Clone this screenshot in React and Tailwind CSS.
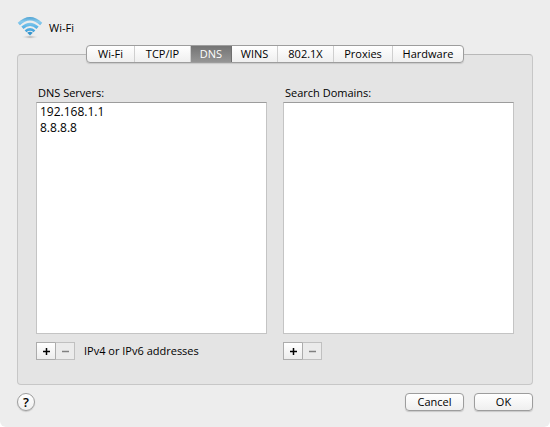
import React, { useState } from 'react';

const tabs = [
    { id: 'wifi', label: 'Wi-Fi', width: 'w-12' },
    { id: 'tcpip', label: 'TCP/IP', width: 'w-14' },
    { id: 'dns', label: 'DNS', width: 'w-[41px]' },
    { id: 'wins', label: 'WINS', width: 'w-[46px]' },
    { id: '8021x', label: '802.1X', width: 'w-14' },
    { id: 'proxies', label: 'Proxies', width: 'w-[59px]' },
    { id: 'hardware', label: 'Hardware', width: 'w-[70px]' },
];

function WifiIcon() {
    return (
        <svg viewBox="0 0 26 24" className="w-[26px] h-6 shrink-0" aria-hidden="true">
            <defs>
                <linearGradient id="signal" x1="0" y1="1" x2="0" y2="20" gradientUnits="userSpaceOnUse">
                    <stop offset="0" stopColor="#4fa3d3" />
                    <stop offset="0.25" stopColor="#8acbed" />
                    <stop offset="0.5" stopColor="#5fb6e6" />
                    <stop offset="1" stopColor="#2b91d0" />
                </linearGradient>
                <radialGradient id="ground">
                    <stop offset="0" stopColor="#a2a2a2" />
                    <stop offset="1" stopColor="#ededed" stopOpacity="0" />
                </radialGradient>
            </defs>
            <ellipse cx="13" cy="21" rx="9" ry="2" fill="url(#ground)" />
            <g fill="none" stroke="url(#signal)" strokeWidth="3.2">
                <path d="M1.8 8Q13 -2.4 24.2 8" />
                <path d="M5.4 11.7Q13 5 20.6 11.7" />
                <path d="M8.5 15.2Q13 11.6 17.5 15.2" strokeWidth="2.7" />
            </g>
            <path d="M10.2 16.7Q13 14.6 15.8 16.7L13 19.5Z" fill="#3595cd" />
        </svg>
    );
}

function Sign({ plus }) {
    return (
        <svg viewBox="0 0 7 7" className="w-[7px] h-[7px]" fill="none" stroke="currentColor" strokeWidth="1.5" aria-hidden="true">
            <path d="M0 3.5H7" />
            {plus && <path d="M3.5 0V7" />}
        </svg>
    );
}

function AddressList({ id, label, items, hint }) {
    return (
        <section className="flex flex-1 flex-col min-w-0">
            <h2 id={id} className="pl-0.5 mb-px text-[11px] leading-4">{label}</h2>
            <ul
                role="listbox"
                aria-labelledby={id}
                className="flex-1 px-[3px] pt-px bg-white border border-[#c4c4c4] border-t-[#9c9c9c] text-xs leading-4"
            >
                {items.map(item => (
                    <li key={item} role="option" aria-selected="false">{item}</li>
                ))}
            </ul>
            <div className="mt-2 flex items-center">
                <button type="button" aria-label={`Add to ${label}`} className="w-5 h-[18px] flex items-center justify-center border border-[#acacac] bg-gradient-to-b from-white to-[#ededed] text-black">
                    <Sign plus />
                </button>
                <button type="button" aria-label={`Remove from ${label}`} disabled className="-ml-px w-5 h-[18px] flex items-center justify-center border border-[#c0c0c0] border-l-[#acacac] bg-[#ebebeb] text-[#808080]">
                    <Sign />
                </button>
                {hint && <p className="ml-[9px] text-[11px] leading-4 whitespace-nowrap">{hint}</p>}
            </div>
        </section>
    );
}

export default function App() {
    const [active, setActive] = useState('dns');
    const raised = 'border border-[#9d9d9d] bg-gradient-to-b from-white to-[#efefef] shadow-[0_1px_1px_#c8c8c8]';

    return (
        <div className="bg-white">
            <main className="min-h-screen flex flex-col px-[17px] pt-4 pb-4 rounded-b-md bg-[#ededed] font-['Open_Sans','Noto_Sans',sans-serif] text-[11px] text-black">
                <header className="h-6 flex items-center gap-[6px]">
                    <WifiIcon />
                    <h1 className="text-[11px] leading-4">Wi-Fi</h1>
                </header>

                <div className="mt-[14px] flex flex-1 flex-col border border-[#c7c7c7] border-t-[#b8b8b8] rounded bg-[#e4e4e4]">
                    {/* Tab strip sits across the top edge of the panel */}
                    <div role="tablist" className={`-mt-[10px] self-center flex max-w-full h-[18px] rounded ${raised}`}>
                        {tabs.map(tab => (
                            <button
                                key={tab.id}
                                type="button"
                                role="tab"
                                aria-selected={active === tab.id}
                                onClick={() => setActive(tab.id)}
                                className={`${tab.width} flex items-center justify-center text-[11px] leading-4 border-r last:border-r-0 ${
                                    active === tab.id
                                        ? 'bg-gradient-to-b from-[#747474] to-[#959595] border-[#6f6f6f] text-white'
                                        : 'border-[#cfcfcf]'
                                }`}
                            >
                                {tab.label}
                            </button>
                        ))}
                    </div>

                    <div role="tabpanel" className="flex flex-1 gap-4 px-[18px] pt-[22px] pb-6">
                        <AddressList id="dns-servers" label="DNS Servers:" items={['192.168.1.1', '8.8.8.8']} hint="IPv4 or IPv6 addresses" />
                        <AddressList id="search-domains" label="Search Domains:" items={[]} />
                    </div>
                </div>

                <footer className="mt-2 flex items-center gap-[10px]">
                    <button type="button" aria-label="Help" className={`mr-auto w-[18px] h-[18px] flex items-center justify-center rounded-full text-[13px] leading-4 font-semibold ${raised}`}>?</button>
                    <button type="button" className={`w-[59px] h-[18px] flex items-center justify-center rounded text-[11px] leading-4 ${raised}`}>Cancel</button>
                    <button type="button" className={`w-[59px] h-[18px] flex items-center justify-center rounded text-[11px] leading-4 ${raised}`}>OK</button>
                </footer>
            </main>
        </div>
    );
}
